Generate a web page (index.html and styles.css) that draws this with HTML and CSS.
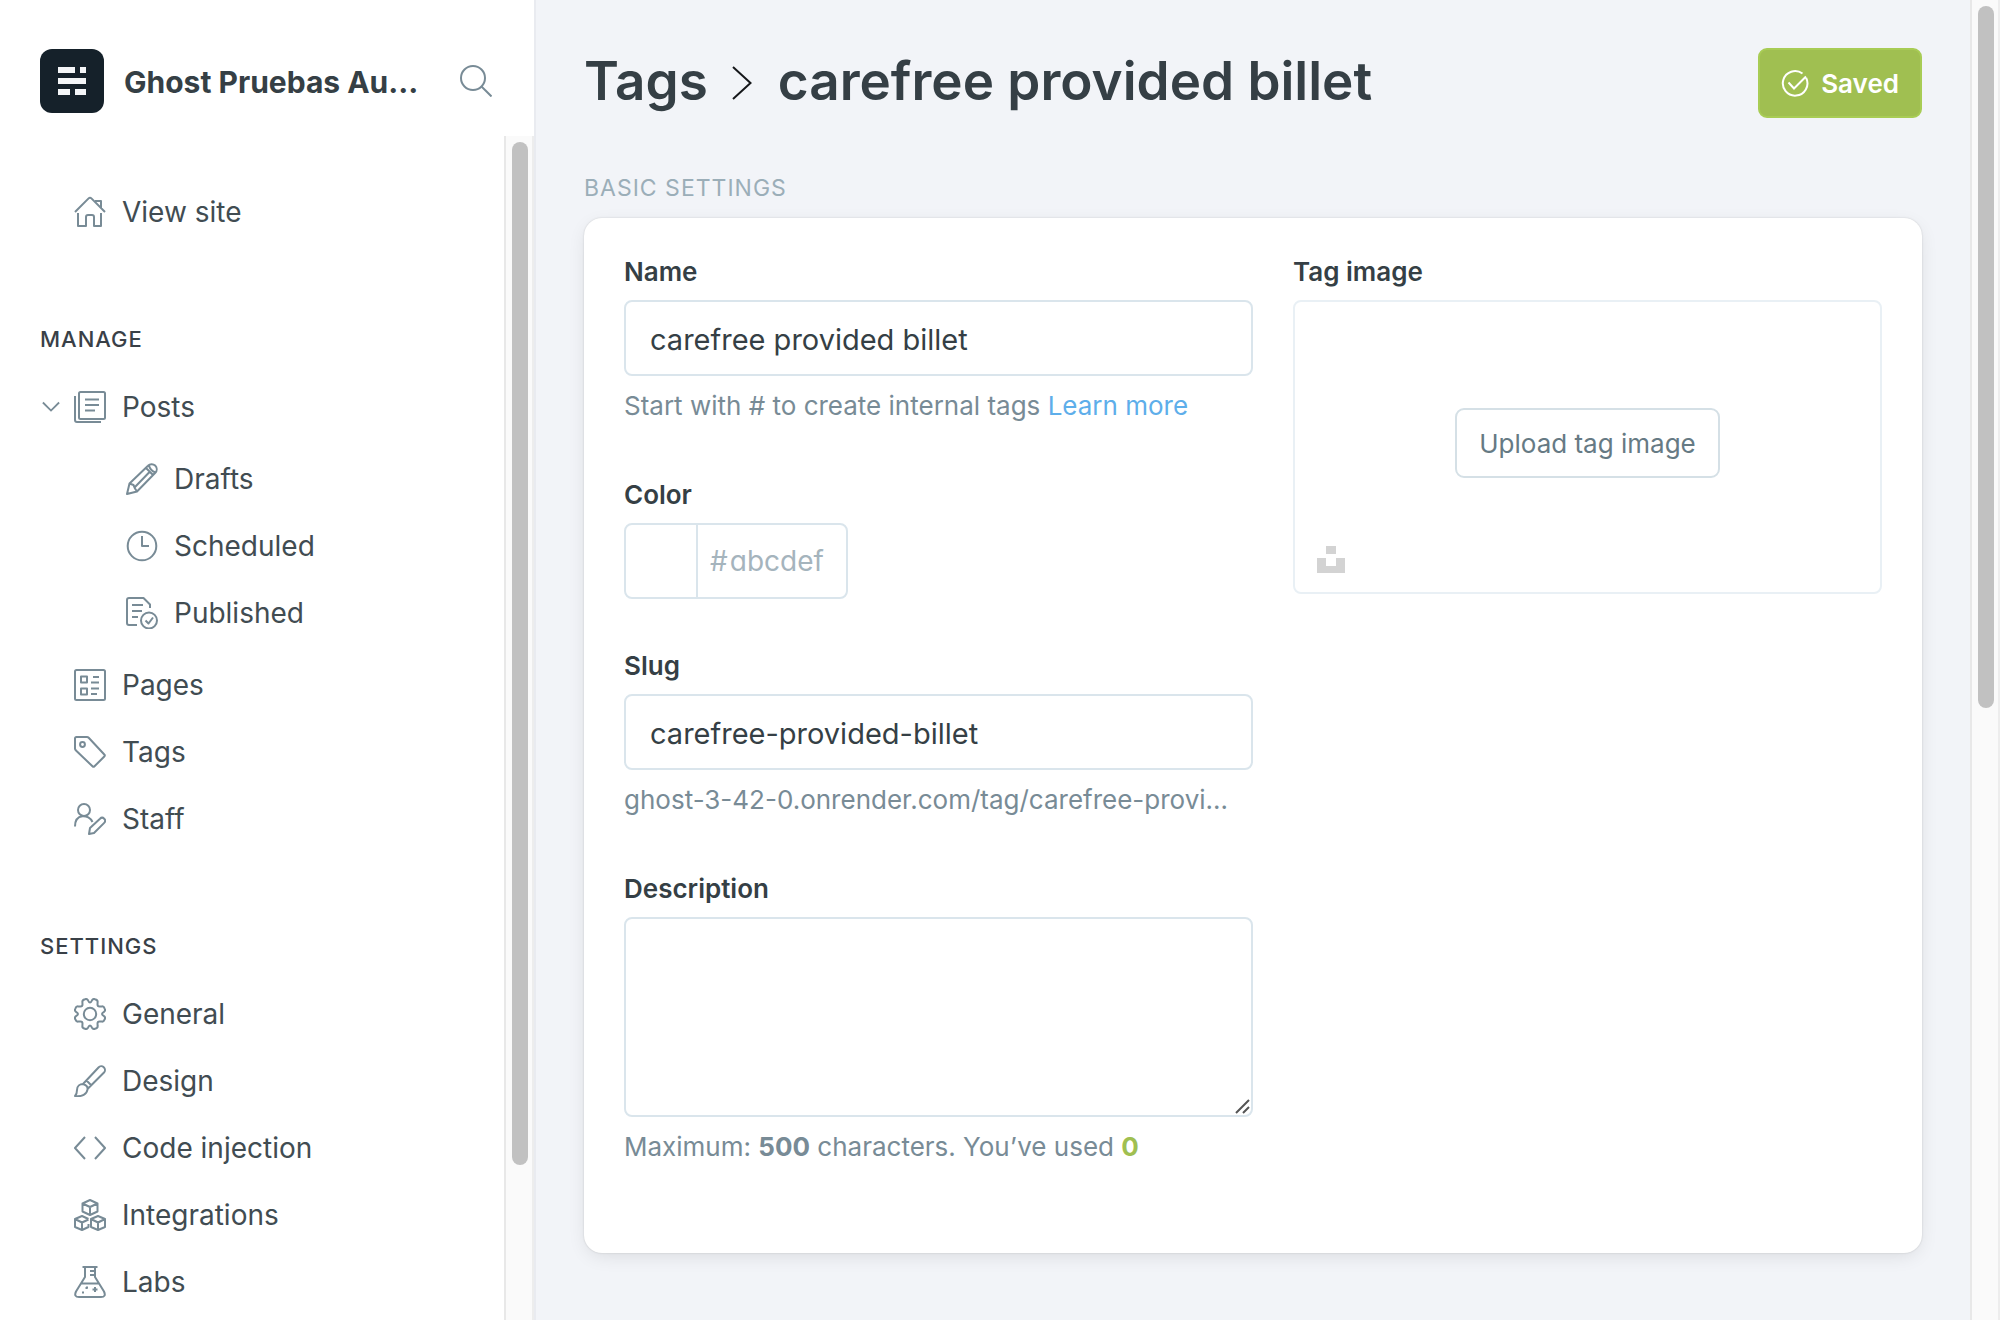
FILE: index.html
```html
<!DOCTYPE html>
<html lang="en">
<head>
<meta charset="utf-8">
<title>Tags - Ghost Pruebas</title>
<link rel="stylesheet" href="styles.css">
</head>
<body>
<div class="app">
  <aside class="sidebar">
    <header class="sidebar-header">
      <svg class="logo" viewBox="0 0 64 64" aria-hidden="true"><rect width="64" height="64" rx="12" fill="#15212a"/><path fill="#f4f6f8" d="M18 18h17v6H18zM40 18h6v6h-6zM18 29h28v6H18zM18 40h12v6H18zM35 40h11v6H35z"/></svg>
      <span class="site-name">Ghost Pruebas Au…</span>
      <button class="search" type="button" aria-label="Search"><svg class="icon" viewBox="0 0 32 32"><circle cx="13" cy="13" r="12"/><path d="M21.500 21.500L31.500 31.500"/></svg></button>
    </header>
    <div class="sidebar-body">
      <nav class="nav">
        <a class="nav-item" href="#"><svg class="icon" viewBox="0 0 32 32"><path d="M1 16L14.600 2.400q1.400-1.400 2.800 0L31 16M21 5h6v7M4 17v13h8V21q0-2 2-2h4q2 0 2 2v9h7V17" /></svg>View site</a>
        <h2 class="nav-title">Manage</h2>
        <a class="nav-item has-toggle" href="#"><svg class="toggle" viewBox="0 0 20 12" aria-hidden="true"><path d="M1 1l9 9 9-9"/></svg><svg class="icon" viewBox="0 0 32 32"><rect x="5" y="1" width="26" height="27" rx="1.500"/><path d="M1 5v24q0 2 2 2h24M11 8.500h14M11 14h14M11 19.500h10"/></svg>Posts</a>
        <div class="subnav">
          <a class="nav-item" href="#"><svg class="icon" viewBox="0 0 32 32"><path d="M1 31l2.500-10.500L22 2.700a4.900 4.900 0 0 1 7.300 7L11 28.500zM3.500 20.500l4 1.500 1.500 3.500 2 3M20 5l7 7M23 2.500q1 5 6.500 7M9 24L23.500 9"/></svg>Drafts</a>
          <a class="nav-item" href="#"><svg class="icon" viewBox="0 0 32 32"><circle cx="16" cy="16" r="14.300"/><path d="M16 6v10h7"/></svg>Scheduled</a>
          <a class="nav-item" href="#"><svg class="icon" viewBox="0 0 32 32"><path d="M11 28H3q-2 0-2-2V3q0-2 2-2h14.500L24 7.500V11M6 8h11M6 14h10M6 20h6M19.500 23.500l3 3 4.500-6"/><circle cx="23" cy="23.500" r="8"/></svg>Published</a>
        </div>
        <a class="nav-item" href="#"><svg class="icon" viewBox="0 0 32 32"><rect x="1" y="1" width="30" height="30" rx="1.500"/><path d="M7 7.500h6v6H7zM7 19.500h6v6H7zM19 8h6M17 13.500h8M17 19.500h8M17 25h6"/></svg>Pages</a>
        <a class="nav-item" href="#"><svg class="icon" viewBox="0 0 32 32"><path d="M1 2.500Q1 1 2.500 1H13q1 0 1.700.7L30.300 18.500q1 1 0 2L20.500 30.300q-1 1-2 0L2 14.500q-1-1-1-2z"/><circle cx="8.500" cy="8.500" r="2.400"/></svg>Tags</a>
        <a class="nav-item" href="#"><svg class="icon" viewBox="0 0 32 32"><circle cx="10" cy="7" r="6"/><path d="M1 23.500C1 10 15 11 18.500 19M15 31l1-6L26 15.700a2.900 2.900 0 0 1 4.200 4.200L20 30z"/></svg>Staff</a>
        <h2 class="nav-title">Settings</h2>
        <a class="nav-item" href="#"><svg class="icon" viewBox="0 0 32 32"><path d="M16 4.500q1 0 2-2.200Q19 .5 21 1.200q3 .8 2.600 3l-.1 2.300q0 2 2 2l2.300-.1q2-.3 3 2.400.8 2-.8 3Q28 15 28 16t2 2.200q1.600 1 .8 3-1 2.700-3 2.400l-2.300-.1q-2 0-2 2l.1 2.300q.4 2.200-2.600 3-2 .7-3-1.100-1-2.200-2-2.200t-2 2.200q-1 1.800-3 1.100-3-.8-2.600-3l.1-2.300q0-2-2-2l-2.300.1q-2 .3-3-2.400-.8-2 .8-3Q4 17 4 16t-2-2.200q-1.600-1-.8-3 1-2.700 3-2.400l2.300.1q2 0 2-2L8.400 4.200Q8 2 11 1.200q2-.7 3 1.100 1 2.200 2 2.200z"/><circle cx="16" cy="16" r="6.200"/></svg>General</a>
        <a class="nav-item" href="#"><svg class="icon" viewBox="0 0 32 32"><path d="M1 31q2-2 2-6c0-4 3-6 6-6 3 1 5 3 4.500 5.500C13 29 8 32 1 31zM9 19L24.500 2.500a3.700 3.700 0 0 1 5.500 5L13.500 24M12.500 15.500l4.500 4.500"/></svg>Design</a>
        <a class="nav-item" href="#"><svg class="icon" viewBox="0 0 32 32"><path d="M11 5L1 16l10 11M21 5l10 11-10 11"/></svg>Code injection</a>
        <a class="nav-item" href="#"><svg class="icon" viewBox="0 0 32 32"><path d="M16 1l7.500 3.500v8L16 16l-7.500-3.500v-8zM8.500 4.500L16 8l7.500-3.500M16 8v8M14.500 25v3L8 31l-7-3v-8l7-3 6.500 3M1 20l7 3.500 6.500-3M8 23.500V31M24 17l7 3v8l-7 3-7-3v-8zM17 20l7 3.500 7-3.500M24 23.500V31"/></svg>Integrations</a>
        <a class="nav-item" href="#"><svg class="icon" viewBox="0 0 32 32"><path d="M8.500 1h15M11 1v10L2 25.500Q-.500 31 5 31h22q5.500 0 3-5.500L21 11V1M6.500 17.500h19M21 5h-5M21 9h-5M21 21v5M18.500 23.500h5M12 21.500h2M12.500 21v2M8 26.500h2M9 25.500v2"/></svg>Labs</a>
      </nav>
      <div class="scrollbar"><div class="thumb thumb-nav"></div></div>
    </div>
  </aside>
  <main class="main">
    <header class="page-header">
      <h1 class="page-title"><a class="crumb" href="#">Tags</a><svg class="crumb-arrow" viewBox="0 0 20 34" aria-hidden="true"><path d="M1 1l17.500 16L1 33"/></svg><span>carefree provided billet</span></h1>
      <button class="save" type="button"><svg class="save-icon" viewBox="0 0 28 28" aria-hidden="true"><path d="M21.500 4.500A12.300 12.300 0 1 0 25.200 9M7.500 13.500L13 19.500 25 7.500"/></svg>Saved</button>
    </header>
    <h2 class="section-title">Basic settings</h2>
    <form class="card">
      <div class="column">
        <div class="field">
          <label class="label" for="name">Name</label>
          <input class="input" id="name" type="text" value="carefree provided billet">
          <p class="help">Start with # to create internal tags <a class="link" href="#">Learn more</a></p>
        </div>
        <div class="field">
          <label class="label" for="color">Color</label>
          <div class="color-group">
            <span class="swatch"></span>
            <span class="hash">#</span>
            <input class="color-input" id="color" type="text" placeholder="abcdef">
          </div>
        </div>
        <div class="field">
          <label class="label" for="slug">Slug</label>
          <input class="input" id="slug" type="text" value="carefree-provided-billet">
          <p class="help">ghost-3-42-0.onrender.com/tag/carefree-provi…</p>
        </div>
        <div class="field">
          <label class="label" for="description">Description</label>
          <div class="textarea-wrap">
            <textarea class="input textarea" id="description"></textarea>
            <svg class="grip" viewBox="0 0 15 15" aria-hidden="true"><path d="M1 14L14 1M8 14l6-6"/></svg>
          </div>
          <p class="help">Maximum: <b>500</b> characters. You’ve used <b class="count">0</b></p>
        </div>
      </div>
      <div class="column">
        <span class="label">Tag image</span>
        <div class="uploader">
          <button class="upload" type="button">Upload tag image</button>
          <button class="unsplash" type="button" aria-label="Unsplash"><svg viewBox="0 0 28 28"><path d="M9 0h10v8H9zM0 12h9v8h10v-8h9v15H0z"/></svg></button>
        </div>
      </div>
    </form>
  </main>
  <div class="scrollbar"><div class="thumb thumb-page"></div></div>
</div>
</body>
</html>
```
FILE: styles.css
```css
* { box-sizing: border-box; }
body { margin: 0; font-family: Inter, "Liberation Sans", sans-serif; font-size: 26px; color: #394047; background: #f2f4f8; }
h1, h2, p { margin: 0; }
a { color: inherit; text-decoration: none; }
button, input, textarea { font-family: inherit; margin: 0; }
button { cursor: pointer; }

.app { display: flex; height: 100vh; overflow: hidden; }

.sidebar { display: flex; flex-direction: column; flex: none; width: 536px; background: #fff; border-right: 2px solid #e9ebf0; }
.sidebar-header { display: flex; flex: none; align-items: flex-start; height: 136px; padding: 49px 42px 0 40px; }
.logo { flex: none; width: 64px; height: 64px; margin-right: 20px; }
.site-name { flex: none; white-space: nowrap; font-size: 30px; font-weight: 700; line-height: 66px; color: #353f45; }
.search { display: flex; margin: 16px 0 0 auto; padding: 0; border: 0; background: none; }
.icon { flex: none; width: 32px; height: 32px; fill: none; stroke: #788b96; stroke-width: 2; stroke-linejoin: round; }
.sidebar-body { display: flex; flex: 1; min-height: 0; }
.nav { flex: 1; padding-top: 42px; overflow: hidden; }
.nav-item { display: flex; align-items: center; gap: 16px; height: 67px; padding-left: 74px; font-size: 28px; color: #414c52; white-space: nowrap; }
.nav-title { height: 128px; padding: 80px 0 0 40px; font-size: 22px; font-weight: 500; line-height: 28px; letter-spacing: 1px; text-transform: uppercase; color: #394047; }
.has-toggle { padding-left: 42px; }
.toggle { flex: none; width: 18px; height: 12px; margin-right: -2px; fill: none; stroke: #788b96; stroke-width: 2; }
.subnav { padding: 5px 0 5px 52px; }

.scrollbar { flex: none; width: 30px; padding: 6px 4px 6px 6px; background: #fafafa; border-left: 2px solid #e8e8e8; border-right: 2px solid #ededed; }
.thumb { width: 16px; border-radius: 8px; background: #c1c1c1; }
.thumb-nav { height: 87.3%; }
.thumb-page { height: 53.7%; }

.main { flex: 1; min-width: 0; padding: 48px 48px 0; }
.page-header { display: flex; align-items: flex-start; justify-content: space-between; height: 70px; }
.page-title { display: flex; align-items: center; font-size: 53px; font-weight: 600; line-height: 66px; color: #353f45; white-space: nowrap; }
.crumb-arrow { width: 20px; height: 34px; margin: 4px 26px 0 24px; fill: none; stroke: #15171a; stroke-width: 2; }
.save { display: flex; align-items: center; gap: 12px; height: 70px; padding: 0 21px; border: 2px solid #a8cc55; border-radius: 9px; background: #a0bf51; color: #fff; font-size: 26px; font-weight: 600; }
.save-icon { width: 28px; height: 28px; fill: none; stroke: #fff; stroke-width: 2; }
.section-title { margin-top: 54px; font-size: 23px; font-weight: 400; line-height: 32px; letter-spacing: 1px; text-transform: uppercase; color: #9baeb8; }
.card { display: grid; grid-template-columns: 629px 1fr; gap: 40px; min-height: 1035px; margin-top: 14px; padding: 40px 40px 30px; border-radius: 18px; background: #fff; box-shadow: 0 0 2px rgba(0, 0, 0, .16), 0 5px 20px -4px rgba(0, 0, 0, .12); }
.label { display: block; height: 42px; font-size: 26px; font-weight: 600; line-height: 28px; color: #353f45; }
.input { display: block; width: 100%; height: 76px; padding: 2px 24px 0; border: 2px solid #dae5ec; border-radius: 8px; background: #fff; font-size: 29px; color: #353f45; outline: none; }
.help { height: 105px; padding-top: 14px; font-size: 26px; line-height: 32px; color: #788b96; white-space: nowrap; }
.link { color: #5eaeea; }
.count { color: #a0bf51; }
.textarea-wrap { position: relative; }
.textarea { height: 200px; resize: none; }
.grip { position: absolute; right: 3px; bottom: 3px; width: 15px; height: 15px; fill: none; stroke: #555; stroke-width: 2; }
.color-group { display: flex; align-items: center; width: 224px; height: 76px; margin-bottom: 53px; border: 2px solid #dae5ec; border-radius: 8px; font-size: 28px; color: #a5b4bd; }
.swatch { align-self: stretch; width: 72px; margin-right: 12px; border-right: 2px solid #dae5ec; }
.color-input { flex: 1; min-width: 0; padding: 0 0 0 2px; border: 0; background: none; font-size: 28px; font-feature-settings: "cv11"; outline: none; }
.color-input::placeholder { color: #a5b4bd; }
.uploader { position: relative; display: flex; align-items: center; justify-content: center; height: 294px; padding-bottom: 8px; border: 2px solid #e9f0f5; border-radius: 8px; }
.upload { height: 70px; padding: 0 22px; border: 2px solid #d5e0e6; border-radius: 9px; background: #fff; color: #667a84; font-size: 26px; }
.unsplash { position: absolute; left: 22px; bottom: 18px; display: flex; padding: 0; border: 0; background: none; }
.unsplash svg { width: 28px; height: 28px; fill: #d3d3d3; }
```
